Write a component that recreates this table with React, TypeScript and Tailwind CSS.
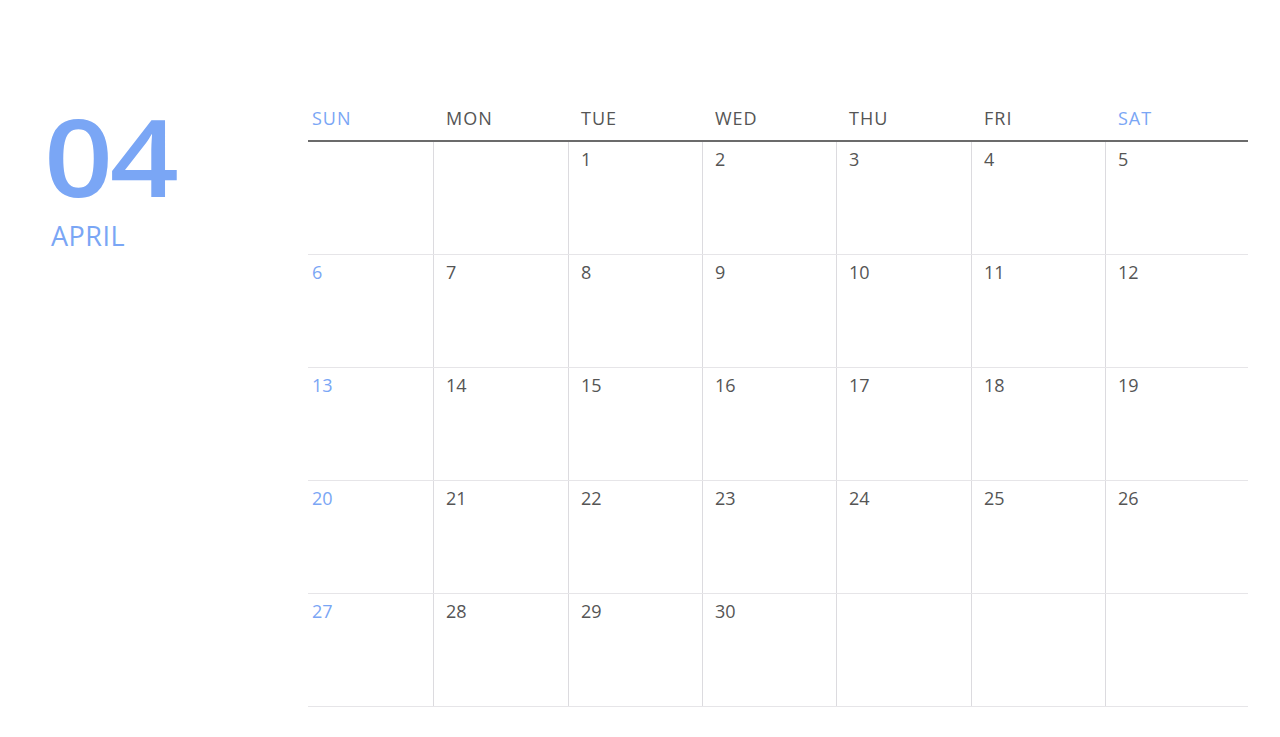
const DAYS = ['SUN', 'MON', 'TUE', 'WED', 'THU', 'FRI', 'SAT'];

const WEEKS: (number | null)[][] = [
  [null, null, 1, 2, 3, 4, 5],
  [6, 7, 8, 9, 10, 11, 12],
  [13, 14, 15, 16, 17, 18, 19],
  [20, 21, 22, 23, 24, 25, 26],
  [27, 28, 29, 30, null, null, null],
];

const cols = 'grid grid-cols-[125px_135px_134px_134px_135px_134px_143px]';

export default function App() {
  return (
    <div
      className="w-[1280px] h-[737px] bg-white flex overflow-hidden"
      style={{ fontFamily: '"Open Sans", "Noto Sans", sans-serif' }}
    >
      <div className="w-[308px] shrink-0 pl-[44px] pt-[112px]">
        <div className="text-[106px] leading-[88px] font-semibold text-[#7aa6f5] tracking-[-3px] scale-x-[1.14] origin-left">
          04
        </div>
        <div className="pl-[7px] mt-[19px] text-[27px] leading-[34px] font-medium tracking-[0.5px] text-[#7aa6f5]">
          APRIL
        </div>
      </div>

      <div className="w-[940px] pt-[104px]">
        <div className={`${cols} h-[38px] border-b-2 border-[#6b6b6b]`}>
          {DAYS.map((d, i) => (
            <div
              key={d}
              className={`text-[18px] leading-[28px] tracking-[1px] ${i === 0 ? 'pl-1' : 'pl-[13px]'} ${
                i === 0 || i === 6 ? 'text-[#7aa6f5]' : 'text-[#555555]'
              }`}
            >
              {d}
            </div>
          ))}
        </div>

        {WEEKS.map((week, r) => (
          <div key={r} className={`${cols} h-[113px] border-b border-[#e6e5e8]`}>
            {week.map((n, i) => (
              <div
                key={i}
                className={`pt-[5px] text-[18px] leading-[24px] ${
                  i === 0 ? 'pl-1 text-[#7aa6f5]' : 'pl-[12px] border-l border-[#dcdbdf] text-[#555555]'
                }`}
              >
                {n}
              </div>
            ))}
          </div>
        ))}
      </div>
    </div>
  );
}
